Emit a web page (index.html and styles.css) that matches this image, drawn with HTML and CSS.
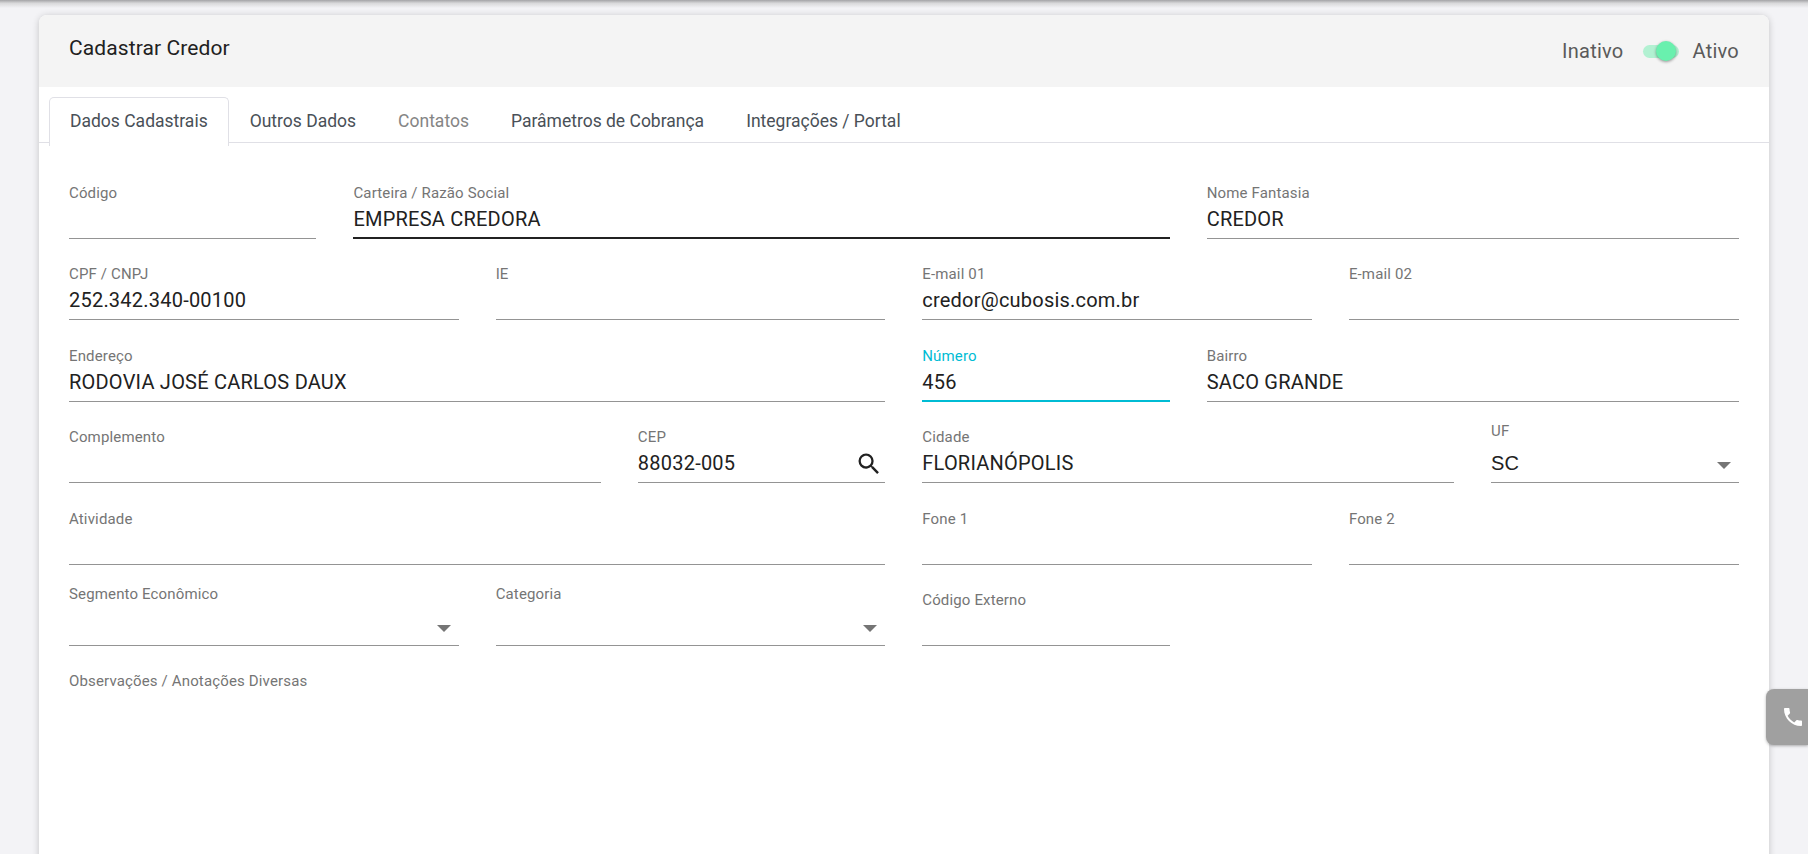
FILE: index.html

```html
<!DOCTYPE html>
<html lang="pt-br">
<head>
    <meta charset="UTF-8">
    <meta name="viewport" content="width=device-width, initial-scale=1.0">
    <title>Cadastrar Credor</title>
    <link rel="stylesheet" href="styles.css">
</head>
<body>

<div class="topbar"></div>

<main class="page">
    <section class="card">
        <header class="card-header">
            <h1>Cadastrar Credor</h1>
            <div class="status">
                <span>Inativo</span>
                <span class="toggle"><span class="toggle-thumb"></span></span>
                <span>Ativo</span>
            </div>
        </header>

        <nav class="tabs">
            <a class="tab active" href="#dados">Dados Cadastrais</a>
            <a class="tab" href="#outros">Outros Dados</a>
            <a class="tab disabled" href="#contatos">Contatos</a>
            <a class="tab" href="#parametros">Parâmetros de Cobrança</a>
            <a class="tab" href="#integracoes">Integrações / Portal</a>
        </nav>

        <form class="form-grid">
            <div class="field span-2">
                <label>Código</label>
                <div class="value"></div>
            </div>
            <div class="field span-6 dark">
                <label>Carteira / Razão Social</label>
                <div class="value">EMPRESA CREDORA</div>
            </div>
            <div class="field span-4">
                <label>Nome Fantasia</label>
                <div class="value">CREDOR</div>
            </div>

            <div class="field span-3">
                <label>CPF / CNPJ</label>
                <div class="value">252.342.340-00100</div>
            </div>
            <div class="field span-3">
                <label>IE</label>
                <div class="value"></div>
            </div>
            <div class="field span-3">
                <label>E-mail 01</label>
                <div class="value">credor@cubosis.com.br</div>
            </div>
            <div class="field span-3">
                <label>E-mail 02</label>
                <div class="value"></div>
            </div>

            <div class="field span-6">
                <label>Endereço</label>
                <div class="value">RODOVIA JOSÉ CARLOS DAUX</div>
            </div>
            <div class="field span-2 focused">
                <label>Número</label>
                <div class="value">456</div>
            </div>
            <div class="field span-4">
                <label>Bairro</label>
                <div class="value">SACO GRANDE</div>
            </div>

            <div class="field span-4">
                <label>Complemento</label>
                <div class="value"></div>
            </div>
            <div class="field span-2">
                <label>CEP</label>
                <div class="value with-icon">88032-005
                    <svg class="search-icon" viewBox="0 0 24 24" width="28" height="28"><path d="M15.5 14h-.79l-.28-.27A6.47 6.47 0 0 0 16 9.5 6.5 6.5 0 1 0 9.5 16c1.61 0 3.09-.59 4.23-1.57l.27.28v.79l5 4.99L20.49 19l-4.99-5zm-6 0C7.01 14 5 11.99 5 9.5S7.01 5 9.5 5 14 7.01 14 9.5 11.99 14 9.5 14z"/></svg>
                </div>
            </div>
            <div class="field span-4">
                <label>Cidade</label>
                <div class="value">FLORIANÓPOLIS</div>
            </div>
            <div class="field span-2 select">
                <label>UF</label>
                <div class="value">SC<span class="arrow"></span></div>
            </div>

            <div class="field span-6">
                <label>Atividade</label>
                <div class="value"></div>
            </div>
            <div class="field span-3">
                <label>Fone 1</label>
                <div class="value"></div>
            </div>
            <div class="field span-3">
                <label>Fone 2</label>
                <div class="value"></div>
            </div>

            <div class="field span-3 select">
                <label>Segmento Econômico</label>
                <div class="value"><span class="arrow"></span></div>
            </div>
            <div class="field span-3 select">
                <label>Categoria</label>
                <div class="value"><span class="arrow"></span></div>
            </div>
            <div class="field span-2">
                <label>Código Externo</label>
                <div class="value"></div>
            </div>

            <div class="field span-12 notes">
                <label>Observações / Anotações Diversas</label>
            </div>
        </form>
    </section>
</main>

<a class="phone-tab" href="#fone">
    <svg viewBox="0 0 24 24" width="24" height="24"><path d="M6.62 10.79c1.44 2.83 3.76 5.14 6.59 6.59l2.2-2.2c.27-.27.67-.36 1.02-.24 1.12.37 2.33.57 3.57.57.55 0 1 .45 1 1V20c0 .55-.45 1-1 1-9.39 0-17-7.61-17-17 0-.55.45-1 1-1h3.5c.55 0 1 .45 1 1 0 1.25.2 2.45.57 3.57.11.35.03.74-.25 1.02l-2.2 2.2z"/></svg>
</a>

</body>
</html>
```

FILE: styles.css

```css
html, body {
    height: 100%;
}
body {
    font-family: Roboto, Arial, sans-serif;
    margin: 0;
    background-color: #f3f3f6;
    overflow: hidden;
}
.topbar {
    height: 8px;
    background: linear-gradient(#a3a3a6, #d8d8da 40%, #f3f3f6);
}
.page {
    padding: 7px 39px 0 39px;
}
.card {
    background-color: white;
    border-radius: 8px;
    box-shadow: 0 1px 7px rgba(0, 0, 0, 0.2);
    min-height: 900px;
}
.card-header {
    display: flex;
    justify-content: space-between;
    background-color: #f4f4f4;
    border-radius: 8px 8px 0 0;
    height: 72px;
    padding: 0 30px;
}
.card-header h1 {
    margin: 20px 0 0;
    font-size: 21px;
    line-height: 26px;
    letter-spacing: 0.1px;
    font-weight: 400;
    color: #212121;
}
.status {
    display: flex;
    align-items: center;
    gap: 16px;
    height: 72px;
    font-size: 20px;
    letter-spacing: 0.25px;
    color: #5a5a5a;
}
.status span:first-child {
    margin-right: 3px;
}
.toggle {
    position: relative;
    display: block;
    width: 36px;
    height: 13px;
    margin-right: -2px;
    border-radius: 7px;
    background-color: #b2f1d2;
}
.toggle-thumb {
    position: absolute;
    right: 0;
    top: -4px;
    width: 20px;
    height: 20px;
    border-radius: 50%;
    background-color: #69f0ae;
    box-shadow: 0 1px 3px rgba(0, 0, 0, 0.4);
}
.tabs {
    display: flex;
    height: 56px;
    padding: 10px 0 0 10px;
    box-sizing: border-box;
    border-bottom: 1px solid #e0e0e6;
}
.tab {
    padding: 0 20px;
    line-height: 46px;
    height: 46px;
    font-size: 17.5px;
    color: #495057;
    text-decoration: none;
    border: 1px solid transparent;
    border-bottom: 0;
}
.tab.active {
    height: 48px;
    background-color: white;
    border-color: #e0e0e6;
    border-radius: 5px 5px 0 0;
}
.tab.disabled {
    color: #858585;
}
.form-grid {
    display: grid;
    grid-template-columns: repeat(12, 1fr);
    column-gap: 37px;
    row-gap: 25.4px;
    padding: 40px 30.5px 0 30px;
}
.span-2 { grid-column: span 2; }
.span-3 { grid-column: span 3; }
.span-4 { grid-column: span 4; }
.span-6 { grid-column: span 6; }
.span-12 { grid-column: span 12; }
.field {
    height: 56px;
}
.field label {
    display: block;
    font-size: 15px;
    line-height: 20px;
    letter-spacing: 0.15px;
    color: #757575;
}
.value {
    position: relative;
    height: 35px;
    line-height: 32px;
    font-size: 20px;
    letter-spacing: 0.22px;
    color: #212121;
    border-bottom: 1px solid #949494;
}
.field.dark .value {
    height: 34px;
    border-bottom: 2px solid #212121;
}
.field.focused label {
    color: #00bcd4;
}
.field.focused .value {
    height: 34px;
    border-bottom: 2px solid #00bcd4;
}
.search-icon {
    position: absolute;
    right: 2px;
    top: 3px;
    fill: #212121;
}
.field.select {
    margin-top: -6px;
    height: 62px;
}
.field.select .value {
    height: 41px;
    line-height: 44px;
    letter-spacing: 0;
    font-family: "Liberation Sans", Arial, sans-serif;
}
.arrow {
    position: absolute;
    right: 8px;
    top: 21px;
    border-left: 7px solid transparent;
    border-right: 7px solid transparent;
    border-top: 7px solid #757575;
}
.phone-tab {
    position: fixed;
    right: 0;
    top: 689px;
    display: flex;
    align-items: center;
    justify-content: flex-end;
    width: 42px;
    height: 56px;
    padding-right: 3px;
    box-sizing: border-box;
    background-color: #a0a0a0;
    border-radius: 8px 0 0 8px;
    box-shadow: 0 1px 3px rgba(0, 0, 0, 0.3);
}
.phone-tab svg {
    fill: white;
}
```
